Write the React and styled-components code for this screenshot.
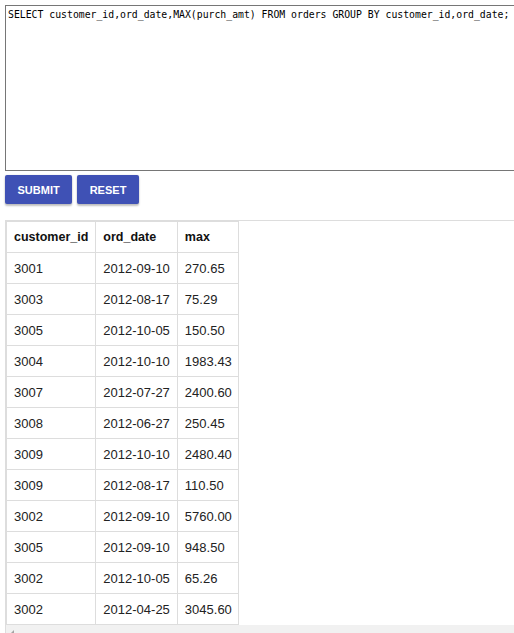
import React from 'react'
import styled, { createGlobalStyle } from 'styled-components'

const GlobalStyle = createGlobalStyle`
    html, body {
        margin: 0;
        padding: 0;
        overflow: hidden;
        background: #ffffff;
    }
`

const Page = styled.div`
    padding: 5px 0 0 5px;
    width: 520px;
    font-family: Arial, "Liberation Sans", sans-serif;
`

const QueryBox = styled.textarea`
    display: block;
    box-sizing: border-box;
    width: 520px;
    height: 166px;
    margin: 0;
    padding: 3px 2px;
    border: 1px solid #767676;
    border-radius: 0;
    resize: none;
    outline: none;
    font: 9.8px "DejaVu Sans Mono", "Liberation Mono", monospace;
    color: #000;
    line-height: 12px;
`

const Toolbar = styled.div`
    display: flex;
    gap: 5px;
    margin-top: 4px;
`

const Button = styled.button`
    height: 29px;
    padding: 0 12.5px;
    border: none;
    border-radius: 2px;
    background: #3f51b5;
    color: #ffffff;
    font: bold 11px Arial, "Liberation Sans", sans-serif;
    text-transform: uppercase;
    box-shadow: 0 2px 2px rgba(0, 0, 0, .24), 0 0 2px rgba(0, 0, 0, .12);
    cursor: pointer;
`

const Results = styled.div`
    margin-top: 16px;
    border-top: 1px solid #dddddd;
    border-left: 1px solid #dddddd;
`

const TableScroll = styled.div`
    overflow-x: auto;
`

/* horizontal scrollbar track under the table */
const ScrollTrack = styled.div`
    display: flex;
    align-items: center;
    height: 15px;
    background: #f1f1f1;
`

const ScrollArrow = styled.span`
    width: 0;
    height: 0;
    margin-left: 5px;
    border-top: 3px solid transparent;
    border-bottom: 3px solid transparent;
    border-right: 3px solid #a3a3a3;
`

const Table = styled.table`
    border-collapse: collapse;
    border: 1px solid #dddddd;
    border-top: none;
    border-left: none;
    font-size: 13px;
    color: #222;
`

const Cell = styled.td`
    height: 30px;
    padding: 0 7px;
    border: 1px solid #dddddd;
    text-align: left;
    white-space: nowrap;
    font-size: ${({ head }) => (head ? '12.5px' : '13px')};
    font-weight: ${({ head }) => (head ? 'bold' : 'normal')};
    color: ${({ head }) => (head ? '#111' : '#222')};
    &:last-child {
        padding-right: 6px;
    }
`

const rows = [
    ['3001', '2012-09-10', '270.65'],
    ['3003', '2012-08-17', '75.29'],
    ['3005', '2012-10-05', '150.50'],
    ['3004', '2012-10-10', '1983.43'],
    ['3007', '2012-07-27', '2400.60'],
    ['3008', '2012-06-27', '250.45'],
    ['3009', '2012-10-10', '2480.40'],
    ['3009', '2012-08-17', '110.50'],
    ['3002', '2012-09-10', '5760.00'],
    ['3005', '2012-09-10', '948.50'],
    ['3002', '2012-10-05', '65.26'],
    ['3002', '2012-04-25', '3045.60'],
]

export default function App() {
    return (
        <Page>
            <GlobalStyle />
            <QueryBox
                spellCheck={false}
                defaultValue="SELECT customer_id,ord_date,MAX(purch_amt) FROM orders GROUP BY customer_id,ord_date;"
            />
            <Toolbar>
                <Button>Submit</Button>
                <Button>Reset</Button>
            </Toolbar>
            <Results>
                <TableScroll>
                    <Table>
                        <thead>
                            <tr>
                                <Cell as="th" head>customer_id</Cell>
                                <Cell as="th" head>ord_date</Cell>
                                <Cell as="th" head>max</Cell>
                            </tr>
                        </thead>
                        <tbody>
                            {rows.map((r, i) => (
                                <tr key={i}>
                                    {r.map((v, j) => <Cell key={j}>{v}</Cell>)}
                                </tr>
                            ))}
                        </tbody>
                    </Table>
                </TableScroll>
                <ScrollTrack>
                    <ScrollArrow />
                </ScrollTrack>
            </Results>
        </Page>
    )
}
